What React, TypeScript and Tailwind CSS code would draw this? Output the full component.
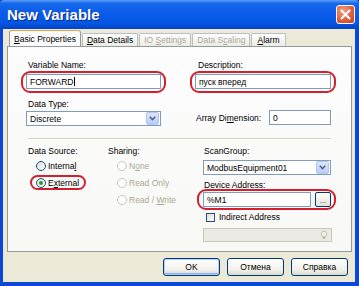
import React from "react";

const INPUT = "h-[15px] border border-[#7f9db9] bg-white flex items-center pl-[3px] text-black";
const TAB = "flex h-[13px] items-center rounded-t-[2px] border border-b-0 border-[#b9bfc3] bg-[linear-gradient(#ffffff,#ecebe5)] px-[4px]";

function U({ children }: { children: React.ReactNode }) {
  return <span className="underline underline-offset-[1px] decoration-[0.5px]">{children}</span>;
}

function Ring({ className }: { className: string }) {
  // red annotation oval drawn over the field
  return <span className={`pointer-events-none absolute rounded-[9px] border-2 border-[#d3202f] ${className}`} />;
}

function DropBtn() {
  return (
    <span className="ml-auto mr-px flex h-[13px] w-[13px] items-center justify-center rounded-[2px] border border-[#b4c7f2] bg-[linear-gradient(#dbe6fd,#b9cdf8)]">
      <svg width="7" height="5" viewBox="0 0 7 5">
        <path d="M0.8 0.8 L3.5 3.6 L6.2 0.8" fill="none" stroke="#4d6185" strokeWidth="1.5" />
      </svg>
    </span>
  );
}

function Radio({ checked, disabled }: { checked?: boolean; disabled?: boolean }) {
  return (
    <span
      className={`flex h-[10px] w-[10px] shrink-0 items-center justify-center rounded-full border ${
        disabled ? "border-[#cac8bb] bg-white" : "border-[#1c5180] bg-[linear-gradient(135deg,#dcdcd5,#ffffff)]"
      }`}
    >
      {checked && <span className="h-[4px] w-[4px] rounded-full bg-[#21a121]" />}
    </span>
  );
}

function Button({ label, primary }: { label: string; primary?: boolean }) {
  return (
    <div
      className={`flex h-[18px] w-[57px] items-center justify-center rounded-[3px] border border-[#003c74] bg-[linear-gradient(#ffffff,#f0efe9_70%,#dcd8cc)] text-black ${
        primary ? "shadow-[inset_0_0_0_1px_#b7d0f7,inset_0_-1px_0_1px_#8cb0ec]" : ""
      }`}
    >
      {label}
    </div>
  );
}

export default function App() {
  return (
    <div className="flex h-[286px] w-[359px] flex-col overflow-hidden bg-[#0b48d4] font-['Liberation_Sans',Arial,sans-serif] text-[8.5px] leading-[10px]">
      {/* title bar */}
      <div className="flex h-[29px] shrink-0 items-center rounded-t-[4px] bg-[linear-gradient(#5a9ef9,#1568ea_12%,#0a5ce8_45%,#0457e2_80%,#0442c4)] pl-[7px] pr-[4px]">
        <span className="text-[15px] font-bold leading-none text-white [text-shadow:1px_1px_0_#0a2a8a]">New Variable</span>
        <span className="ml-auto flex h-[19px] w-[19px] items-center justify-center rounded-[3px] border border-white bg-[radial-gradient(circle_at_35%_30%,#f0a28a,#e0613f_55%,#c2401c)]">
          <svg width="11" height="11" viewBox="0 0 11 11">
            <path d="M1.5 1.5 L9.5 9.5 M9.5 1.5 L1.5 9.5" stroke="white" strokeWidth="2" strokeLinecap="round" />
          </svg>
        </span>
      </div>

      {/* dialog body */}
      <div className="ml-[3px] mr-[4px] flex h-[253px] flex-col bg-[#ece9d8]">
        {/* tabs */}
        <div className="ml-[6px] mt-[2px] flex h-[15px] items-end">
          <div className="relative z-10 flex h-[16px] items-center rounded-t-[3px] border border-b-0 border-[#919b9c] border-t-[#e7a33c] bg-[#fcfcfe] px-[4px] text-black">
            <span><U>B</U>asic Properties</span>
          </div>
          <div className={`${TAB} ml-px text-black`}>
            <span><U>D</U>ata Details</span>
          </div>
          <div className={`${TAB} ml-px text-[#aca899]`}>
            <span>IO <U>S</U>ettings</span>
          </div>
          <div className={`${TAB} ml-px text-[#aca899]`}>
            <span>Data S<U>c</U>aling</span>
          </div>
          <div className={`${TAB} ml-px px-[5px] text-black`}>
            <span><U>A</U>larm</span>
          </div>
        </div>

        {/* tab page */}
        <div className="ml-[4px] mr-[3px] h-[206px] border border-[#919b9c] bg-[linear-gradient(#fdfdfe,#f8f8f5)] pt-[13px] text-black">
          <div className="flex pl-[18px]">
            <div className="flex w-[135px] flex-col">
              <span className="pl-[2px]">Variable Name:</span>
              <div className="relative mt-[4px]">
                <div className={INPUT}>FORWARD<span className="ml-px h-[9px] w-px bg-black" /></div>
                <Ring className="-bottom-[4px] -left-[5px] -right-[5px] -top-[3px]" />
              </div>
              <span className="mt-[10px] pl-[2px]">Data Type:</span>
              <div className={`${INPUT} mt-[2px]`}>
                Discrete
                <DropBtn />
              </div>
            </div>
            <div className="ml-[34px] flex w-[136px] flex-col">
              <span className="pl-[3px]">Description:</span>
              <div className="relative mt-[4px]">
                <div className={INPUT}>пуск вперед</div>
                <Ring className="-bottom-[4px] -left-[5px] -right-[5px] -top-[3px]" />
              </div>
              <div className="mt-[21px] flex items-center">
                <span className="pl-px">Array Di<U>m</U>ension:</span>
                <div className={`${INPUT} ml-auto w-[62px]`}>0</div>
              </div>
            </div>
          </div>

          <div className="mx-[20px] mt-[12px] h-px bg-[#d6d3c6]" />

          <div className="mt-[7px] flex pl-[20px]">
            <div className="flex w-[80px] flex-col">
              <span>Data Source:</span>
              <div className="ml-[8px] mt-px flex h-[17px] items-center gap-[2px]">
                <Radio />
                <span>Interna<U>l</U></span>
              </div>
              <div className="relative ml-[8px] flex h-[17px] items-center gap-[2px]">
                <Radio checked />
                <span>E<U>x</U>ternal</span>
                <Ring className="-left-[6px] top-[1px] bottom-[1px] w-[56px]" />
              </div>
            </div>
            <div className="flex w-[95px] flex-col text-[#aca899]">
              <span className="text-black">Sharing:</span>
              <div className="ml-[9px] mt-px flex h-[17px] items-center gap-[2px]">
                <Radio disabled />
                <span>N<U>o</U>ne</span>
              </div>
              <div className="ml-[9px] flex h-[17px] items-center gap-[2px]">
                <Radio disabled />
                <span>Read Only</span>
              </div>
              <div className="ml-[9px] flex h-[17px] items-center gap-[2px]">
                <Radio disabled />
                <span>Read / <U>W</U>rite</span>
              </div>
            </div>
            <div className="flex w-[128px] flex-col">
              <span className="pl-px">ScanGroup:</span>
              <div className={`${INPUT} mt-[4px]`}>
                ModbusEquipment01
                <DropBtn />
              </div>
              <span className="mt-[5px] pl-px">Device Address:</span>
              <div className="relative mt-[2px] flex">
                <div className={`${INPUT} w-[108px]`}>%M1</div>
                <div className="ml-auto flex h-[15px] w-[16px] items-end justify-center rounded-[2px] border border-[#003c74] bg-[linear-gradient(#ffffff,#e6e3da)] pb-[2px] text-[7px] leading-none">
                  ...
                </div>
                <Ring className="-bottom-[3px] -left-[6px] -right-[5px] -top-[3px]" />
              </div>
              <div className="mt-[4px] flex h-[12px] items-center gap-[4px] pl-[3px]">
                <span className="h-[9px] w-[9px] border border-[#1c5180] bg-[linear-gradient(135deg,#dcdcd5,#ffffff)]" />
                <span>Indirect Address</span>
              </div>
              <div className="mt-[5px] flex h-[14px] w-[129px] items-center border border-[#c9c7ba] bg-[#ebeae4] pr-[2px]">
                <svg className="ml-auto" width="10" height="10" viewBox="0 0 10 10">
                  <circle cx="5" cy="4" r="2.8" fill="#f4f2e8" stroke="#b9b6a8" strokeWidth="0.8" />
                  <rect x="3.7" y="6.8" width="2.6" height="2" fill="#b9b6a8" />
                </svg>
              </div>
            </div>
          </div>
        </div>

        {/* buttons */}
        <div className="mt-[6px] flex justify-end gap-[7px] pr-[7px]">
          <Button label="OK" primary />
          <Button label="Отмена" />
          <Button label="Справка" />
        </div>
      </div>
    </div>
  );
}
